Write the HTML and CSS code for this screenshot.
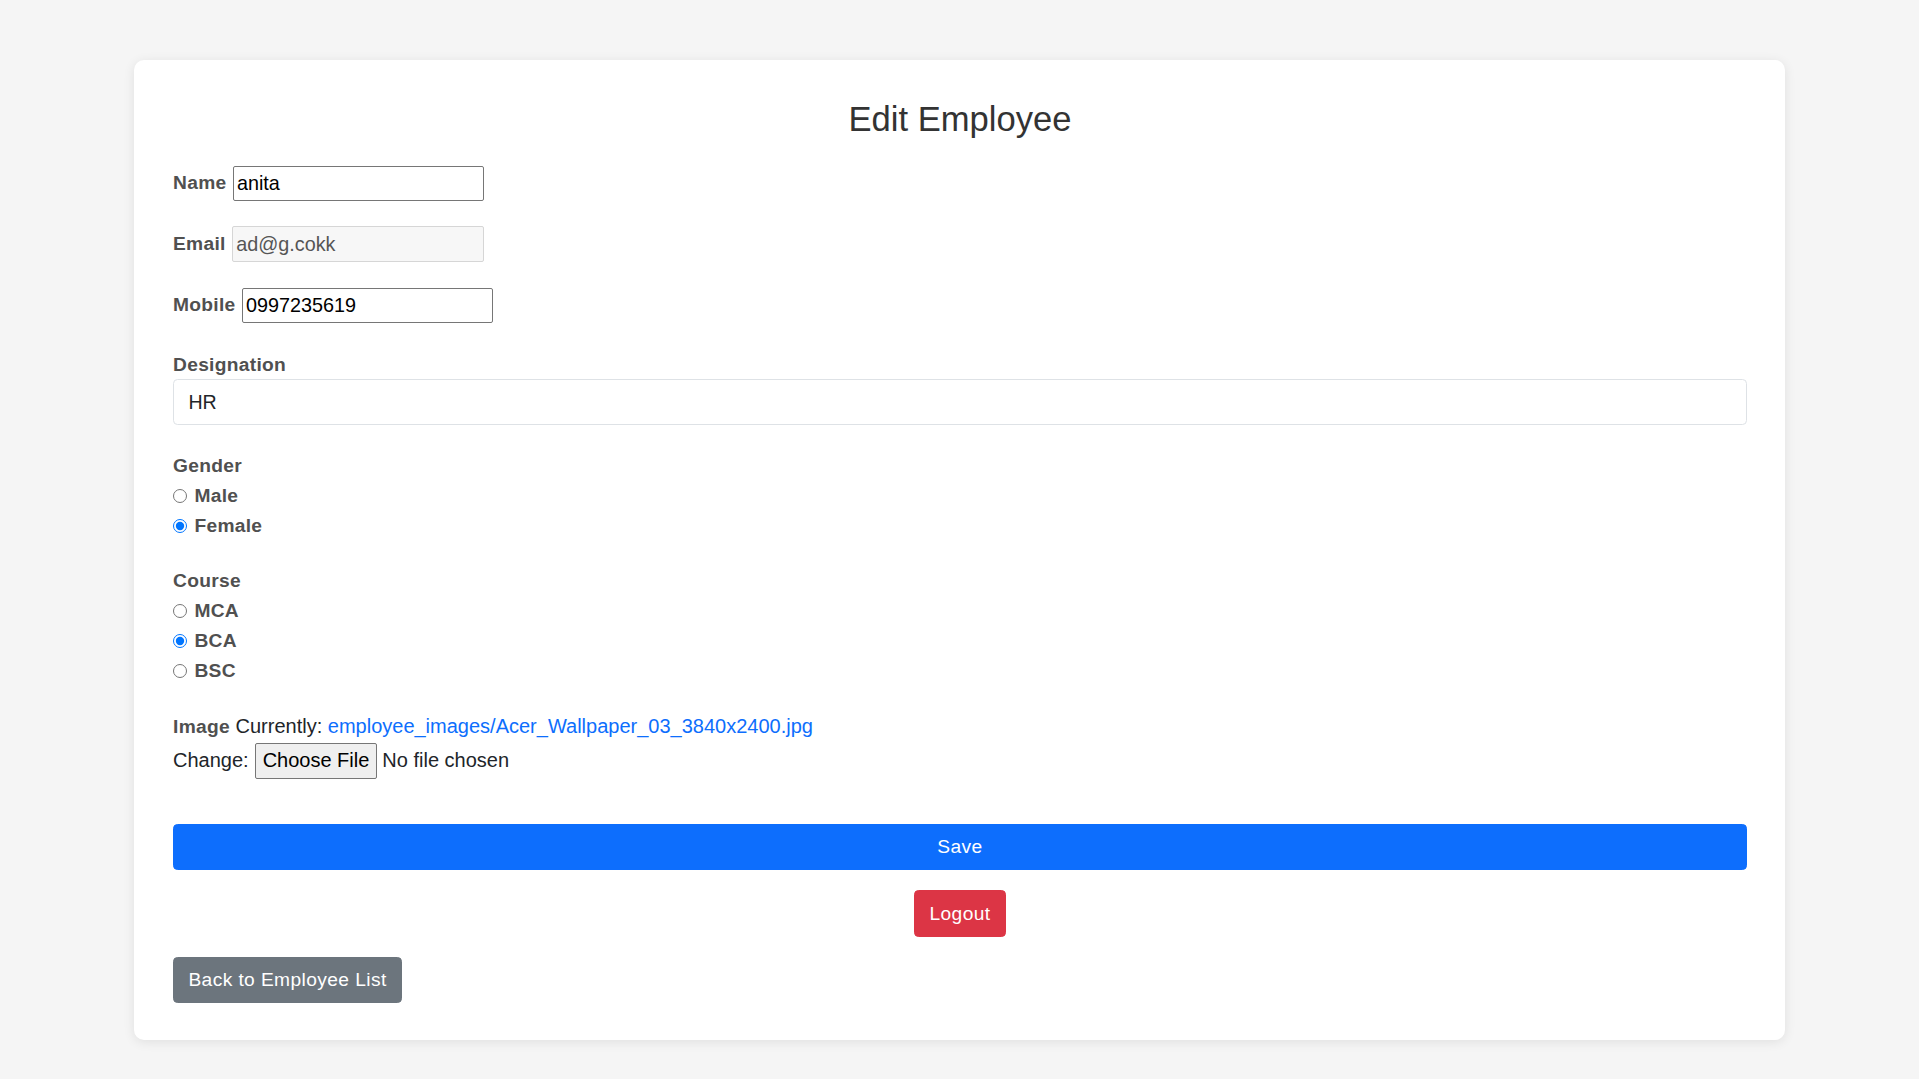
FILE: index.html
```html
<!DOCTYPE html>
<html lang="en">
<head>
<meta charset="utf-8">
<title>Edit Employee</title>
<link rel="stylesheet" href="styles.css">
</head>
<body>
<div class="card">
  <h2 class="title">Edit Employee</h2>
  <form class="form">
    <div class="inline-row">
      <label class="lbl" for="name">Name</label>
      <input class="plain-input" id="name" type="text" value="anita">
    </div>
    <div class="inline-row">
      <label class="lbl" for="email">Email</label>
      <input class="plain-input readonly" id="email" type="text" value="ad@g.cokk" readonly>
    </div>
    <div class="inline-row">
      <label class="lbl" for="mobile">Mobile</label>
      <input class="plain-input" id="mobile" type="text" value="0997235619">
    </div>
    <div class="block-group first">
      <label class="lbl block" for="designation">Designation</label>
      <input class="form-control" id="designation" type="text" value="HR">
    </div>
    <div class="block-group">
      <div class="lbl block">Gender</div>
      <label class="radio-row"><input type="radio" name="gender"><span class="lbl">Male</span></label>
      <label class="radio-row"><input type="radio" name="gender" checked><span class="lbl">Female</span></label>
    </div>
    <div class="block-group">
      <div class="lbl block">Course</div>
      <label class="radio-row"><input type="radio" name="course"><span class="lbl">MCA</span></label>
      <label class="radio-row"><input type="radio" name="course" checked><span class="lbl">BCA</span></label>
      <label class="radio-row"><input type="radio" name="course"><span class="lbl">BSC</span></label>
    </div>
    <div class="image-group">
      <div class="text-line"><span class="lbl">Image</span> Currently: <a class="link" href="#">employee_images/Acer_Wallpaper_03_3840x2400.jpg</a></div>
      <div class="change-line">Change: <button type="button" class="file-btn">Choose File</button><span class="file-status">No file chosen</span></div>
    </div>
    <button type="button" class="btn btn-primary btn-block">Save</button>
    <div class="center-row"><button type="button" class="btn btn-danger">Logout</button></div>
    <div class="left-row"><button type="button" class="btn btn-secondary">Back to Employee List</button></div>
  </form>
</div>
</body>
</html>
```

FILE: styles.css
```css
* { box-sizing: border-box; }

html, body {
  margin: 0;
  padding: 0;
  background: #f5f5f5;
  font-family: "Liberation Sans", Arial, sans-serif;
  font-size: 20px;
  color: #212529;
}

body {
  padding: 60px 134px 38px;
}

.card {
  background: #ffffff;
  border-radius: 10px;
  box-shadow: 0 2px 12px rgba(0, 0, 0, 0.09);
  padding: 39px 38px 37px 39px;
}

.title {
  margin: 0 0 25px;
  text-align: center;
  font-weight: 400;
  font-size: 34.6px;
  line-height: 1.2;
  color: #333333;
}

.form {
  display: flex;
  flex-direction: column;
}

.lbl {
  font-weight: 700;
  font-size: 19.2px;
  letter-spacing: 0.3px;
  color: #505050;
  line-height: 28.8px;
}

.lbl.block { display: block; }

.inline-row {
  display: flex;
  align-items: center;
  gap: 6.5px;
  height: 35px;
  margin-bottom: 26.4px;
}

.inline-row:nth-child(3) {
  margin-bottom: 27.4px;
}

.plain-input {
  width: 251px;
  height: 35px;
  border: 1px solid #767676;
  border-radius: 2px;
  padding: 0 3px;
  font-family: "Liberation Sans", Arial, sans-serif;
  font-size: 19.8px;
  color: #000000;
  background: #ffffff;
  outline: none;
}

.plain-input.readonly {
  width: 252px;
  height: 36px;
  background: #f7f7f7;
  border-color: #d6d6d6;
  color: #555555;
}

.block-group {
  display: flex;
  flex-direction: column;
  margin-bottom: 26px;
}

.block-group.first {
  margin-bottom: 27px;
}

.form-control {
  width: 100%;
  height: 46px;
  padding: 7.2px 14.4px;
  border: 1px solid #dee2e6;
  border-radius: 4.5px;
  font-family: "Liberation Sans", Arial, sans-serif;
  font-size: 19.6px;
  color: #212529;
  background: #ffffff;
  outline: none;
}

.radio-row {
  display: flex;
  align-items: center;
  height: 30px;
}

.radio-row input {
  width: 14.4px;
  height: 14.4px;
  margin: 0 7px 0 0;
  accent-color: #0075ff;
}

.image-group {
  display: flex;
  flex-direction: column;
  margin-bottom: 44px;
}

.text-line {
  line-height: 28.8px;
}

.link {
  color: #0d6efd;
  text-decoration: none;
}

.change-line {
  display: flex;
  align-items: center;
  height: 38px;
}

.file-btn {
  margin-left: 6px;
  height: 36px;
  padding: 0 7px;
  border: 1px solid #767676;
  border-radius: 2px;
  background: #efefef;
  font-family: "Liberation Sans", Arial, sans-serif;
  font-size: 20px;
  color: #000000;
}

.file-status {
  margin-left: 5px;
}

.btn {
  display: inline-block;
  height: 46.5px;
  padding: 0 14.4px;
  border: 1px solid transparent;
  border-radius: 4.5px;
  font-family: "Liberation Sans", Arial, sans-serif;
  font-size: 19.2px;
  letter-spacing: 0.4px;
  color: #ffffff;
  cursor: pointer;
}

.btn-block { width: 100%; }

.btn-primary { background: #0d6efd; border-color: #0d6efd; }
.btn-danger { background: #dc3545; border-color: #dc3545; }
.btn-secondary { background: #6c757d; border-color: #6c757d; }

.center-row {
  display: flex;
  justify-content: center;
  margin-top: 20px;
}

.left-row {
  display: flex;
  margin-top: 20px;
}
```
